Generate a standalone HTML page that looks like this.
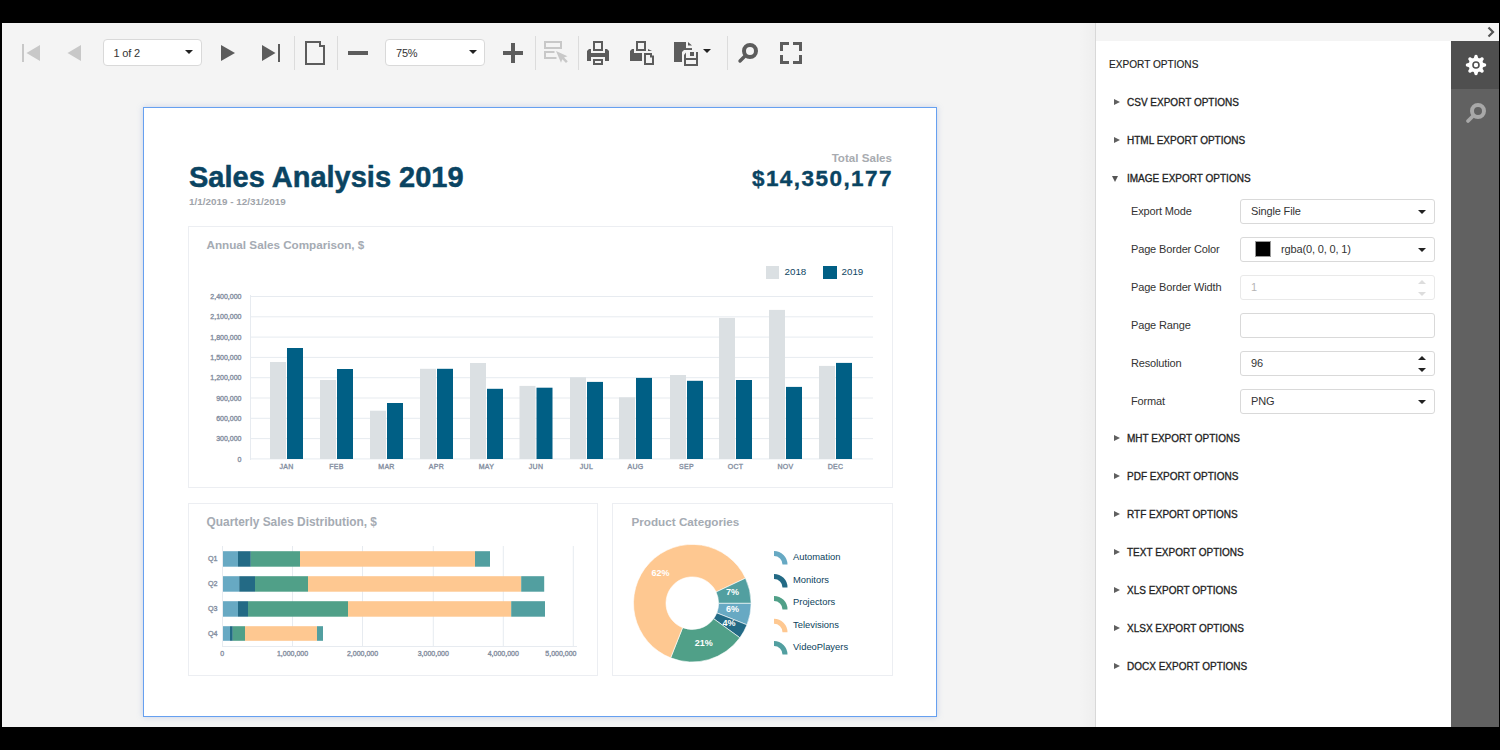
<!DOCTYPE html>
<html><head><meta charset="utf-8">
<style>
*{margin:0;padding:0;box-sizing:border-box}
html,body{width:1500px;height:750px;overflow:hidden;background:#000;font-family:"Liberation Sans",sans-serif}
.a{position:absolute}
#app{position:absolute;left:2px;top:23px;width:1497px;height:704px;background:#f4f4f4;overflow:hidden}
.sep{position:absolute;top:13px;width:1px;height:34px;background:#dcdcdc}
.dd{position:absolute;height:27px;background:#fff;border:1px solid #d9d9d9;border-radius:4px;font-size:11px;color:#333;line-height:26px;padding-left:10px;letter-spacing:-.2px}
.caret{position:absolute;width:0;height:0;border-left:4px solid transparent;border-right:4px solid transparent;border-top:4px solid #222}
#page{position:absolute;left:143px;top:107px;width:794px;height:610px;background:#fff;border:1px solid #66a0f0;box-shadow:0 0 6px rgba(120,150,210,.35)}
#rp{position:absolute;left:1095px;top:23px;width:356px;height:704px;background:#fff;border-left:1px solid #d8d8d8}
#rphead{position:absolute;left:0;top:0;width:404px;height:18px;background:#f4f4f4}
#sb{position:absolute;left:1451px;top:41px;width:48px;height:686px;background:#616161}

.rl{position:absolute;font-size:10px;font-weight:400;color:#222;line-height:12px;white-space:nowrap;-webkit-text-stroke:.3px #222;letter-spacing:0}
.tri{position:absolute;width:0;height:0;border-top:3.5px solid transparent;border-bottom:3.5px solid transparent;border-left:6px solid #606060}
.trid{position:absolute;width:0;height:0;border-left:3.5px solid transparent;border-right:3.5px solid transparent;border-top:6px solid #555}
.lb{position:absolute;left:1131px;font-size:11px;color:#333;line-height:14px;white-space:nowrap;letter-spacing:-.15px}
.ib{position:absolute;left:1240px;width:195px;height:25px;background:#fff;border:1px solid #d9d9d9;border-radius:3px;font-size:11px;color:#333;line-height:23px;padding-left:10px;white-space:nowrap;letter-spacing:-.15px}
.ib.dis{border-color:#e9e9e9;color:#b5b5b5}
.cd{position:absolute;width:0;height:0;border-left:4px solid transparent;border-right:4px solid transparent;border-top:4px solid #222}
.cu{position:absolute;width:0;height:0;border-left:4px solid transparent;border-right:4px solid transparent;border-bottom:4px solid #222}
</style></head><body>
<div id="app"></div>
  <!-- toolbar -->
  <svg class="a" style="left:0;top:0" width="830" height="90" viewBox="0 0 830 90">
<g fill="#c8c8c8">
<rect x="22" y="44" width="2" height="18"/>
<path d="M26.5 53 L40 45 V61 Z"/>
<path d="M67.5 53 L81 45 V61 Z"/>
</g>
<g fill="#5c5c5c">
<path d="M221 45 L235 53 L221 61 Z"/>
<path d="M262 45 L275.5 53 L262 61 Z"/>
<rect x="278" y="44" width="2" height="18"/>
<path fill-rule="evenodd" d="M305 41 H321 V45 H325 V65 H305 Z M307 43 V63 H323 V47 H319 V43 Z"/>
<rect x="348" y="51" width="20" height="4"/>
<rect x="503" y="51" width="20" height="4"/>
<rect x="511" y="43" width="4" height="20"/>
</g>
<g fill="#dcdcdc">
<rect x="294" y="36" width="1" height="34"/>
<rect x="337" y="36" width="1" height="34"/>
<rect x="535" y="36" width="1" height="34"/>
<rect x="578" y="36" width="1" height="34"/>
<rect x="727" y="36" width="1" height="34"/>
</g>
<g fill="#c8c8c8">
<path fill-rule="evenodd" d="M544 41 H562 V49 H544 Z M546 43 V47 H560 V43 Z"/>
<path d="M544 51 H554.5 V53 H546 V57 H556.5 V59 H544 Z"/>
<path d="M556 51 L567.5 56.3 L564 57.6 L567.8 61.3 L566 63 L562.3 59.3 L561 62.8 Z"/>
</g>
<g fill="#5c5c5c">
<path fill-rule="evenodd" d="M593 41 H603 V51 H593 Z M595 43 V49 H601 V43 Z"/>
<path d="M589 49 H591 V53 H605 V49 H607 L609 51 V61 H605 V57 H591 V61 H587 V51 Z"/>
<path fill-rule="evenodd" d="M593 59 H603 V65 H593 Z M595 61 V63 H601 V61 Z"/>
<path fill-rule="evenodd" d="M636 41 H646 V51 H636 Z M638 43 V49 H644 V43 Z"/>
<path d="M632 49 H634 V53 H642 V61 H630 V51 Z"/>
<path d="M648 49 L652 50.9 H648 Z"/>
<path fill-rule="evenodd" d="M644 53 H652 V55.5 H654 V65 H644 Z M646 55 V63 H652 V57.5 H650 V55 Z"/>
<path d="M674 42 H686 V50 H692 V48.3 H686 V42 Z"/>
<path d="M674 42 H686 V48.3 H692 V50 H684 L682 52 V62 H674 Z"/>
<path d="M688 42 L692 45.6 H688 Z"/>
<path d="M684 55 L686 52.5 V64 H696 V52 H698 V66 H684 Z"/><rect x="686" y="58" width="10" height="2"/><rect x="690" y="52" width="4" height="4"/>
<circle cx="750" cy="51" r="6" fill="none" stroke="#5c5c5c" stroke-width="4"/>
<path d="M745.5 55.5 L740 61" stroke="#5c5c5c" stroke-width="3.4" stroke-linecap="round"/>
<path d="M780 42 H789 V45 H783 V51 H780 Z"/>
<path d="M802 42 H793 V45 H799 V51 H802 Z"/>
<path d="M780 64 H789 V61 H783 V55 H780 Z"/>
<path d="M802 64 H793 V61 H799 V55 H802 Z"/>
</g>
<path d="M703 49 H711 L707 53 Z" fill="#222"/>
</svg>
  <div class="dd" style="left:102.5px;top:39px;width:99px">1 of 2</div><div class="caret" style="left:185px;top:50px"></div>
<div class="dd" style="left:385px;top:39px;width:100px">75%</div><div class="caret" style="left:469px;top:50px"></div>
<div id="page"></div>
<!--REP-->
<svg id="rep" class="a" style="left:0;top:0" width="1500" height="750" viewBox="0 0 1500 750" font-family="Liberation Sans, sans-serif">
<text x="189" y="187" font-size="29" font-weight="700" fill="#0a4462" stroke="#0a4462" stroke-width="0.5">Sales Analysis 2019</text>
<text x="189" y="205" font-size="9.9" font-weight="700" fill="#a0a4aa">1/1/2019 - 12/31/2019</text>
<text x="892" y="162" text-anchor="end" font-size="11.6" font-weight="700" fill="#a8abb0">Total Sales</text>
<text x="893" y="185.5" text-anchor="end" font-size="22.5" font-weight="700" fill="#0a4462" stroke="#0a4462" stroke-width="0.4" letter-spacing="1.45">$14,350,177</text>
<rect x="188.5" y="226.5" width="704" height="261" fill="#fff" stroke="#eceef2"/>
<text x="206.5" y="249" font-size="11.7" font-weight="700" fill="#a5abb3">Annual Sales Comparison, $</text>
<rect x="766" y="266" width="13" height="13" fill="#dbe0e3"/>
<rect x="823" y="266" width="14" height="13" fill="#005f85"/>
<text x="784.5" y="274.9" font-size="9.8" fill="#0e4663">2018</text>
<text x="841.5" y="274.9" font-size="9.8" fill="#0e4663">2019</text>
<rect x="251" y="296.0" width="622" height="1" fill="#e7ebf0"/>
<text x="241.5" y="299.1" text-anchor="end" font-size="7" fill="#8690a2" stroke="#8690a2" stroke-width="0.35">2,400,000</text>
<rect x="251" y="316.3" width="622" height="1" fill="#e7ebf0"/>
<text x="241.5" y="319.4" text-anchor="end" font-size="7" fill="#8690a2" stroke="#8690a2" stroke-width="0.35">2,100,000</text>
<rect x="251" y="336.6" width="622" height="1" fill="#e7ebf0"/>
<text x="241.5" y="339.7" text-anchor="end" font-size="7" fill="#8690a2" stroke="#8690a2" stroke-width="0.35">1,800,000</text>
<rect x="251" y="356.9" width="622" height="1" fill="#e7ebf0"/>
<text x="241.5" y="360.0" text-anchor="end" font-size="7" fill="#8690a2" stroke="#8690a2" stroke-width="0.35">1,500,000</text>
<rect x="251" y="377.2" width="622" height="1" fill="#e7ebf0"/>
<text x="241.5" y="380.3" text-anchor="end" font-size="7" fill="#8690a2" stroke="#8690a2" stroke-width="0.35">1,200,000</text>
<rect x="251" y="397.5" width="622" height="1" fill="#e7ebf0"/>
<text x="241.5" y="400.6" text-anchor="end" font-size="7" fill="#8690a2" stroke="#8690a2" stroke-width="0.35">900,000</text>
<rect x="251" y="417.8" width="622" height="1" fill="#e7ebf0"/>
<text x="241.5" y="420.9" text-anchor="end" font-size="7" fill="#8690a2" stroke="#8690a2" stroke-width="0.35">600,000</text>
<rect x="251" y="438.1" width="622" height="1" fill="#e7ebf0"/>
<text x="241.5" y="441.2" text-anchor="end" font-size="7" fill="#8690a2" stroke="#8690a2" stroke-width="0.35">300,000</text>
<rect x="251" y="458.4" width="622" height="1" fill="#e7ebf0"/>
<text x="241.5" y="461.5" text-anchor="end" font-size="7" fill="#8690a2" stroke="#8690a2" stroke-width="0.35">0</text>
<rect x="250" y="295" width="1" height="165" fill="#e7ebf0"/>
<rect x="270" y="362" width="16" height="97.0" fill="#dbe0e3"/>
<rect x="287" y="348" width="16" height="111.0" fill="#005f85"/>
<text x="286.5" y="469" text-anchor="middle" font-size="7" fill="#8690a2" stroke="#8690a2" stroke-width="0.35" letter-spacing=".3">JAN</text>
<rect x="320" y="380" width="16" height="79.0" fill="#dbe0e3"/>
<rect x="337" y="369" width="16" height="90.0" fill="#005f85"/>
<text x="336.5" y="469" text-anchor="middle" font-size="7" fill="#8690a2" stroke="#8690a2" stroke-width="0.35" letter-spacing=".3">FEB</text>
<rect x="370" y="410.7" width="16" height="48.3" fill="#dbe0e3"/>
<rect x="387" y="403" width="16" height="56.0" fill="#005f85"/>
<text x="386.5" y="469" text-anchor="middle" font-size="7" fill="#8690a2" stroke="#8690a2" stroke-width="0.35" letter-spacing=".3">MAR</text>
<rect x="420" y="368.8" width="16" height="90.2" fill="#dbe0e3"/>
<rect x="437" y="368.8" width="16" height="90.2" fill="#005f85"/>
<text x="436.5" y="469" text-anchor="middle" font-size="7" fill="#8690a2" stroke="#8690a2" stroke-width="0.35" letter-spacing=".3">APR</text>
<rect x="470" y="363" width="16" height="96.0" fill="#dbe0e3"/>
<rect x="487" y="388.8" width="16" height="70.2" fill="#005f85"/>
<text x="486.5" y="469" text-anchor="middle" font-size="7" fill="#8690a2" stroke="#8690a2" stroke-width="0.35" letter-spacing=".3">MAY</text>
<rect x="519.5" y="385.9" width="16" height="73.1" fill="#dbe0e3"/>
<rect x="536.5" y="387.7" width="16" height="71.3" fill="#005f85"/>
<text x="536.0" y="469" text-anchor="middle" font-size="7" fill="#8690a2" stroke="#8690a2" stroke-width="0.35" letter-spacing=".3">JUN</text>
<rect x="570" y="377.3" width="16" height="81.7" fill="#dbe0e3"/>
<rect x="587" y="381.9" width="16" height="77.1" fill="#005f85"/>
<text x="586.5" y="469" text-anchor="middle" font-size="7" fill="#8690a2" stroke="#8690a2" stroke-width="0.35" letter-spacing=".3">JUL</text>
<rect x="619" y="397.3" width="16" height="61.7" fill="#dbe0e3"/>
<rect x="636" y="377.9" width="16" height="81.1" fill="#005f85"/>
<text x="635.5" y="469" text-anchor="middle" font-size="7" fill="#8690a2" stroke="#8690a2" stroke-width="0.35" letter-spacing=".3">AUG</text>
<rect x="670" y="375" width="16" height="84.0" fill="#dbe0e3"/>
<rect x="687" y="380.8" width="16" height="78.2" fill="#005f85"/>
<text x="686.5" y="469" text-anchor="middle" font-size="7" fill="#8690a2" stroke="#8690a2" stroke-width="0.35" letter-spacing=".3">SEP</text>
<rect x="719" y="317.9" width="16" height="141.1" fill="#dbe0e3"/>
<rect x="736" y="380" width="16" height="79.0" fill="#005f85"/>
<text x="735.5" y="469" text-anchor="middle" font-size="7" fill="#8690a2" stroke="#8690a2" stroke-width="0.35" letter-spacing=".3">OCT</text>
<rect x="769" y="309.9" width="16" height="149.1" fill="#dbe0e3"/>
<rect x="786" y="386.9" width="16" height="72.1" fill="#005f85"/>
<text x="785.5" y="469" text-anchor="middle" font-size="7" fill="#8690a2" stroke="#8690a2" stroke-width="0.35" letter-spacing=".3">NOV</text>
<rect x="819" y="365.9" width="16" height="93.1" fill="#dbe0e3"/>
<rect x="836" y="362.9" width="16" height="96.1" fill="#005f85"/>
<text x="835.5" y="469" text-anchor="middle" font-size="7" fill="#8690a2" stroke="#8690a2" stroke-width="0.35" letter-spacing=".3">DEC</text>
<rect x="188.5" y="503.5" width="409" height="172" fill="#fff" stroke="#eceef2"/>
<text x="206.5" y="526.4" font-size="11.9" font-weight="700" fill="#a5abb3">Quarterly Sales Distribution, $</text>
<rect x="292.0" y="546" width="1" height="100" fill="#e7ebf0"/>
<rect x="362.0" y="546" width="1" height="100" fill="#e7ebf0"/>
<rect x="432.8" y="546" width="1" height="100" fill="#e7ebf0"/>
<rect x="502.8" y="546" width="1" height="100" fill="#e7ebf0"/>
<rect x="572.8" y="546" width="1" height="100" fill="#e7ebf0"/>
<rect x="222" y="546" width="1" height="101" fill="#e7ebf0"/>
<rect x="222" y="646" width="355" height="1" fill="#e7ebf0"/>
<rect x="223" y="551.2" width="15.0" height="15.5" fill="#67a9c3"/>
<rect x="238" y="551.2" width="12.8" height="15.5" fill="#236a85"/>
<rect x="250.8" y="551.2" width="49.2" height="15.5" fill="#50a088"/>
<rect x="300" y="551.2" width="175.0" height="15.5" fill="#fec891"/>
<rect x="475" y="551.2" width="15.0" height="15.5" fill="#529fa0"/>
<text x="217.5" y="561.4" text-anchor="end" font-size="7.2" fill="#8690a2" stroke="#8690a2" stroke-width="0.35">Q1</text>
<rect x="223" y="576.2" width="16.2" height="15.5" fill="#67a9c3"/>
<rect x="239.2" y="576.2" width="15.8" height="15.5" fill="#236a85"/>
<rect x="255" y="576.2" width="53.0" height="15.5" fill="#50a088"/>
<rect x="308" y="576.2" width="213.2" height="15.5" fill="#fec891"/>
<rect x="521.2" y="576.2" width="23.0" height="15.5" fill="#529fa0"/>
<text x="217.5" y="586.4" text-anchor="end" font-size="7.2" fill="#8690a2" stroke="#8690a2" stroke-width="0.35">Q2</text>
<rect x="223" y="601.2" width="15.0" height="15.5" fill="#67a9c3"/>
<rect x="238" y="601.2" width="10.0" height="15.5" fill="#236a85"/>
<rect x="248" y="601.2" width="100.0" height="15.5" fill="#50a088"/>
<rect x="348" y="601.2" width="163.2" height="15.5" fill="#fec891"/>
<rect x="511.2" y="601.2" width="33.8" height="15.5" fill="#529fa0"/>
<text x="217.5" y="611.4" text-anchor="end" font-size="7.2" fill="#8690a2" stroke="#8690a2" stroke-width="0.35">Q3</text>
<rect x="223" y="626.2" width="7.0" height="14.6" fill="#67a9c3"/>
<rect x="230" y="626.2" width="2.8" height="14.6" fill="#236a85"/>
<rect x="232.8" y="626.2" width="12.2" height="14.6" fill="#50a088"/>
<rect x="245" y="626.2" width="72.0" height="14.6" fill="#fec891"/>
<rect x="317" y="626.2" width="6.0" height="14.6" fill="#529fa0"/>
<text x="217.5" y="636.4" text-anchor="end" font-size="7.2" fill="#8690a2" stroke="#8690a2" stroke-width="0.35">Q4</text>
<text x="222.3" y="656.4" text-anchor="middle" font-size="7" fill="#8690a2" stroke="#8690a2" stroke-width="0.35">0</text>
<text x="292.5" y="656.4" text-anchor="middle" font-size="7" fill="#8690a2" stroke="#8690a2" stroke-width="0.35">1,000,000</text>
<text x="362.5" y="656.4" text-anchor="middle" font-size="7" fill="#8690a2" stroke="#8690a2" stroke-width="0.35">2,000,000</text>
<text x="433.3" y="656.4" text-anchor="middle" font-size="7" fill="#8690a2" stroke="#8690a2" stroke-width="0.35">3,000,000</text>
<text x="503.3" y="656.4" text-anchor="middle" font-size="7" fill="#8690a2" stroke="#8690a2" stroke-width="0.35">4,000,000</text>
<text x="576.5" y="656.4" text-anchor="end" font-size="7" fill="#8690a2" stroke="#8690a2" stroke-width="0.35">5,000,000</text>
<rect x="612.5" y="503.5" width="280" height="172" fill="#fff" stroke="#eceef2"/>
<text x="631.5" y="525.9" font-size="11.7" font-weight="700" fill="#a5abb3">Product Categories</text>
<path d="M751.10 603.20 A58.8 58.8 0 0 1 746.97 624.85 L716.75 612.88 A26.3 26.3 0 0 0 718.60 603.20 Z" fill="#67a9c3" stroke="#fff" stroke-width="0.6"/>
<path d="M746.97 624.85 A58.8 58.8 0 0 1 739.87 637.76 L713.58 618.66 A26.3 26.3 0 0 0 716.75 612.88 Z" fill="#236a85" stroke="#fff" stroke-width="0.6"/>
<path d="M739.87 637.76 A58.8 58.8 0 0 1 670.65 657.87 L682.62 627.65 A26.3 26.3 0 0 0 713.58 618.66 Z" fill="#50a088" stroke="#fff" stroke-width="0.6"/>
<path d="M670.65 657.87 A58.8 58.8 0 1 1 745.50 578.16 L716.10 592.00 A26.3 26.3 0 1 0 682.62 627.65 Z" fill="#fec891" stroke="#fff" stroke-width="0.6"/>
<path d="M745.50 578.16 A58.8 58.8 0 0 1 751.10 603.20 L718.60 603.20 A26.3 26.3 0 0 0 716.10 592.00 Z" fill="#529fa0" stroke="#fff" stroke-width="0.6"/>
<text x="660.5" y="576.4000000000001" text-anchor="middle" font-size="9" font-weight="700" fill="#fff">62%</text>
<text x="732.6" y="595.4000000000001" text-anchor="middle" font-size="9" font-weight="700" fill="#fff">7%</text>
<text x="732.6" y="612.0" text-anchor="middle" font-size="9" font-weight="700" fill="#fff">6%</text>
<text x="728.9" y="625.9000000000001" text-anchor="middle" font-size="9" font-weight="700" fill="#fff">4%</text>
<text x="703.7" y="646.2" text-anchor="middle" font-size="9" font-weight="700" fill="#fff">21%</text>
<path d="M774 551.1 A13.5 13.5 0 0 1 787.5 564.6 H782.5 A8.5 8.5 0 0 0 774 556.1 Z" fill="#67a9c3"/>
<text x="793" y="560.0" font-size="9.4" fill="#0b3f5c">Automation</text>
<path d="M774 573.9 A13.5 13.5 0 0 1 787.5 587.4 H782.5 A8.5 8.5 0 0 0 774 578.9 Z" fill="#236a85"/>
<text x="793" y="582.8" font-size="9.4" fill="#0b3f5c">Monitors</text>
<path d="M774 595.9 A13.5 13.5 0 0 1 787.5 609.4 H782.5 A8.5 8.5 0 0 0 774 600.9 Z" fill="#50a088"/>
<text x="793" y="604.8" font-size="9.4" fill="#0b3f5c">Projectors</text>
<path d="M774 618.7 A13.5 13.5 0 0 1 787.5 632.2 H782.5 A8.5 8.5 0 0 0 774 623.7 Z" fill="#fec891"/>
<text x="793" y="627.6" font-size="9.4" fill="#0b3f5c">Televisions</text>
<path d="M774 641.0 A13.5 13.5 0 0 1 787.5 654.5 H782.5 A8.5 8.5 0 0 0 774 646.0 Z" fill="#529fa0"/>
<text x="793" y="649.9" font-size="9.4" fill="#0b3f5c">VideoPlayers</text>
</svg>
<!--/REP-->
  <div class="a" style="left:1079px;top:23px;width:16px;height:704px;background:linear-gradient(to right,rgba(0,0,0,0),rgba(0,0,0,.025))"></div>
<div id="rp"></div>
  <div id="sb"></div>
<div class="a" style="left:1451px;top:41px;width:48px;height:48px;background:#4f4f4f"></div>
<svg class="a" style="left:1451px;top:40px" width="48" height="50" viewBox="0 0 48 50"><path fill="#fff" d="M35.20 25.00 L35.17 25.32 L35.07 25.63 L34.91 25.94 L34.67 26.22 L34.35 26.48 L33.87 26.69 L33.02 26.79 L32.63 26.96 L32.34 27.13 L32.11 27.31 L31.93 27.49 L31.79 27.69 L31.71 27.90 L31.66 28.13 L31.66 28.39 L31.70 28.68 L31.78 29.01 L31.94 29.40 L32.46 30.07 L32.66 30.56 L32.70 30.97 L32.67 31.34 L32.57 31.67 L32.42 31.96 L32.21 32.21 L31.96 32.42 L31.67 32.57 L31.34 32.67 L30.97 32.70 L30.56 32.66 L30.07 32.46 L29.40 31.94 L29.01 31.78 L28.68 31.70 L28.39 31.66 L28.13 31.66 L27.90 31.71 L27.69 31.79 L27.49 31.93 L27.31 32.11 L27.13 32.34 L26.96 32.63 L26.79 33.02 L26.69 33.87 L26.48 34.35 L26.22 34.67 L25.94 34.91 L25.63 35.07 L25.32 35.17 L25.00 35.20 L24.68 35.17 L24.37 35.07 L24.06 34.91 L23.78 34.67 L23.52 34.35 L23.31 33.87 L23.21 33.02 L23.04 32.63 L22.87 32.34 L22.69 32.11 L22.51 31.93 L22.31 31.79 L22.10 31.71 L21.87 31.66 L21.61 31.66 L21.32 31.70 L20.99 31.78 L20.60 31.94 L19.93 32.46 L19.44 32.66 L19.03 32.70 L18.66 32.67 L18.33 32.57 L18.04 32.42 L17.79 32.21 L17.58 31.96 L17.43 31.67 L17.33 31.34 L17.30 30.97 L17.34 30.56 L17.54 30.07 L18.06 29.40 L18.22 29.01 L18.30 28.68 L18.34 28.39 L18.34 28.13 L18.29 27.90 L18.21 27.69 L18.07 27.49 L17.89 27.31 L17.66 27.13 L17.37 26.96 L16.98 26.79 L16.13 26.69 L15.65 26.48 L15.33 26.22 L15.09 25.94 L14.93 25.63 L14.83 25.32 L14.80 25.00 L14.83 24.68 L14.93 24.37 L15.09 24.06 L15.33 23.78 L15.65 23.52 L16.13 23.31 L16.98 23.21 L17.37 23.04 L17.66 22.87 L17.89 22.69 L18.07 22.51 L18.21 22.31 L18.29 22.10 L18.34 21.87 L18.34 21.61 L18.30 21.32 L18.22 20.99 L18.06 20.60 L17.54 19.93 L17.34 19.44 L17.30 19.03 L17.33 18.66 L17.43 18.33 L17.58 18.04 L17.79 17.79 L18.04 17.58 L18.33 17.43 L18.66 17.33 L19.03 17.30 L19.44 17.34 L19.93 17.54 L20.60 18.06 L20.99 18.22 L21.32 18.30 L21.61 18.34 L21.87 18.34 L22.10 18.29 L22.31 18.21 L22.51 18.07 L22.69 17.89 L22.87 17.66 L23.04 17.37 L23.21 16.98 L23.31 16.13 L23.52 15.65 L23.78 15.33 L24.06 15.09 L24.37 14.93 L24.68 14.83 L25.00 14.80 L25.32 14.83 L25.63 14.93 L25.94 15.09 L26.22 15.33 L26.48 15.65 L26.69 16.13 L26.79 16.98 L26.96 17.37 L27.13 17.66 L27.31 17.89 L27.49 18.07 L27.69 18.21 L27.90 18.29 L28.13 18.34 L28.39 18.34 L28.68 18.30 L29.01 18.22 L29.40 18.06 L30.07 17.54 L30.56 17.34 L30.97 17.30 L31.34 17.33 L31.67 17.43 L31.96 17.58 L32.21 17.79 L32.42 18.04 L32.57 18.33 L32.67 18.66 L32.70 19.03 L32.66 19.44 L32.46 19.93 L31.94 20.60 L31.78 20.99 L31.70 21.32 L31.66 21.61 L31.66 21.87 L31.71 22.10 L31.79 22.31 L31.93 22.51 L32.11 22.69 L32.34 22.87 L32.63 23.04 L33.02 23.21 L33.87 23.31 L34.35 23.52 L34.67 23.78 L34.91 24.06 L35.07 24.37 L35.17 24.68 Z"/><circle cx="25" cy="25" r="3" fill="none" stroke="#4f4f4f" stroke-width="1.6"/></svg>
<svg class="a" style="left:1451px;top:89px" width="48" height="48" viewBox="0 0 48 48"><circle cx="27" cy="22" r="6" fill="none" stroke="#a8a8a8" stroke-width="4"/><path d="M22.5 26.5 L17 32" stroke="#a8a8a8" stroke-width="3.8" stroke-linecap="round"/></svg>
<!--RP-->
<div id="rphead" class="a" style="left:1096px;top:23px;width:403px;height:18px;background:#f4f4f4"></div>
<svg class="a" style="left:1484px;top:24px" width="14" height="14" viewBox="0 0 14 14"><path d="M4.5 3.5 L9 8 L4.5 12.5" fill="none" stroke="#555" stroke-width="2.2"/></svg>
<div class="rl" style="left:1109px;top:58.5px;font-size:10.1px;-webkit-text-stroke:.15px #222;letter-spacing:0">EXPORT OPTIONS</div>
<div class="rl" style="left:1127px;top:97px">CSV EXPORT OPTIONS</div>
<div class="tri" style="left:1114px;top:99px"></div>
<div class="rl" style="left:1127px;top:135px">HTML EXPORT OPTIONS</div>
<div class="tri" style="left:1114px;top:137px"></div>
<div class="rl" style="left:1127px;top:173px">IMAGE EXPORT OPTIONS</div>
<div class="trid" style="left:1112px;top:176px"></div>
<div class="rl" style="left:1127px;top:433px">MHT EXPORT OPTIONS</div>
<div class="tri" style="left:1114px;top:435px"></div>
<div class="rl" style="left:1127px;top:471px">PDF EXPORT OPTIONS</div>
<div class="tri" style="left:1114px;top:473px"></div>
<div class="rl" style="left:1127px;top:509px">RTF EXPORT OPTIONS</div>
<div class="tri" style="left:1114px;top:511px"></div>
<div class="rl" style="left:1127px;top:547px">TEXT EXPORT OPTIONS</div>
<div class="tri" style="left:1114px;top:549px"></div>
<div class="rl" style="left:1127px;top:585px">XLS EXPORT OPTIONS</div>
<div class="tri" style="left:1114px;top:587px"></div>
<div class="rl" style="left:1127px;top:623px">XLSX EXPORT OPTIONS</div>
<div class="tri" style="left:1114px;top:625px"></div>
<div class="rl" style="left:1127px;top:661px">DOCX EXPORT OPTIONS</div>
<div class="tri" style="left:1114px;top:663px"></div>
<div class="lb" style="top:204px">Export Mode</div>
<div class="ib" style="top:199px">Single File</div>
<div class="cd" style="left:1418px;top:210px"></div>
<div class="lb" style="top:242px">Page Border Color</div>
<div class="ib" style="top:237px"><span style="position:absolute;left:14px;top:3px;width:16px;height:16px;background:#000;border:1px solid #999"></span><span style="position:absolute;left:40px;top:0">rgba(0, 0, 0, 1)</span></div>
<div class="cd" style="left:1418px;top:248px"></div>
<div class="lb" style="top:280px">Page Border Width</div>
<div class="ib dis" style="top:275px">1</div>
<div class="cu" style="left:1418px;top:280px;border-bottom-color:#ddd"></div><div class="cd" style="left:1418px;top:292px;border-top-color:#ddd"></div>
<div class="lb" style="top:318px">Page Range</div>
<div class="ib" style="top:313px"></div>
<div class="lb" style="top:356px">Resolution</div>
<div class="ib" style="top:351px">96</div>
<div class="cu" style="left:1418px;top:356px"></div><div class="cd" style="left:1418px;top:368px"></div>
<div class="lb" style="top:394px">Format</div>
<div class="ib" style="top:389px">PNG</div>
<div class="cd" style="left:1418px;top:400px"></div>
<!--/RP-->
</body></html>
